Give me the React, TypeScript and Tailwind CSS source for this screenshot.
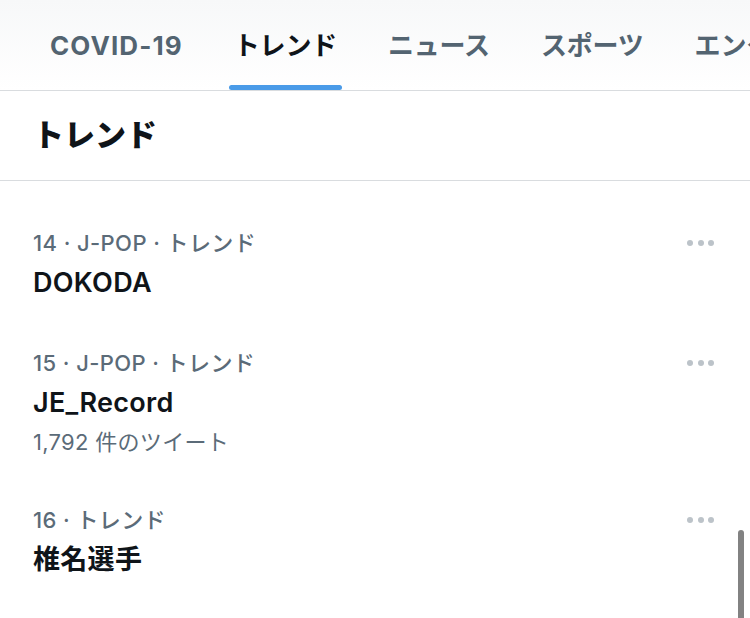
const FONT = "font-['Inter','Noto_Sans_CJK_JP',sans-serif]";

const TABS = [
  { label: "COVID-19", active: false, latin: true },
  { label: "トレンド", active: true, latin: false },
  { label: "ニュース", active: false, latin: false },
  { label: "スポーツ", active: false, latin: false },
  { label: "エンタメ", active: false, latin: false },
];

const TRENDS = [
  { meta: "14 · J-POP · トレンド", title: "DOKODA" },
  { meta: "15 · J-POP · トレンド", title: "JE_Record", count: "1,792 件のツイート" },
  { meta: "16 · トレンド", title: "椎名選手" },
];

function Dots() {
  return (
    <div className="mt-[12px] flex gap-[4.5px]">
      <span className="h-[6px] w-[6px] rounded-full bg-[#bcc3c9]" />
      <span className="h-[6px] w-[6px] rounded-full bg-[#bcc3c9]" />
      <span className="h-[6px] w-[6px] rounded-full bg-[#bcc3c9]" />
    </div>
  );
}

export default function App() {
  return (
    <div className={`relative h-[618px] w-[750px] overflow-hidden bg-white ${FONT}`}>
      <nav className="flex h-[91px] gap-[51px] overflow-hidden border-b border-[#d9dcdf] bg-gradient-to-b from-[#f7f8f9] to-white pl-[50px]">
        {TABS.map((tab) => (
          <div key={tab.label} className="relative flex shrink-0 flex-col items-center">
            <span
              className={`pt-[28px] text-[26px] font-bold leading-[36px] whitespace-nowrap ${
                tab.latin ? "tracking-[1.1px]" : "tracking-[-0.2px]"
              } ${tab.active ? "text-[#0f1419]" : "text-[#536471]"}`}
            >
              {tab.label}
            </span>
            {tab.active && (
              <div className="absolute bottom-0 left-[-5px] right-[-5px] h-[5px] rounded-full bg-[#4a9be8]" />
            )}
          </div>
        ))}
      </nav>

      <header className="flex h-[90px] items-center border-b border-[#d9dcdf] px-[33px]">
        <h1 className="text-[31px] font-extrabold text-[#0f1419]">トレンド</h1>
      </header>

      <section className="pt-[27px]">
        {TRENDS.map((t) => (
          <article key={t.title} className="flex items-start pl-[33px] pr-[36px] pt-[20px] pb-[25px]">
            <div className="flex-1">
              <p className="text-[22px] font-medium leading-[30px] tracking-[0.4px] text-[#5b6b78]">{t.meta}</p>
              <p className="mt-[5px] text-[27px] font-semibold leading-[40px] tracking-[0.3px] text-[#0f1419]">
                {t.title}
              </p>
              {t.count && (
                <p className="mt-[1px] text-[22px] leading-[36px] tracking-[0.3px] text-[#5b6b78]">{t.count}</p>
              )}
            </div>
            <Dots />
          </article>
        ))}
      </section>

      <div className="absolute right-[6px] top-[530px] h-[100px] w-[6px] rounded-full bg-[#828282]" />
    </div>
  );
}
